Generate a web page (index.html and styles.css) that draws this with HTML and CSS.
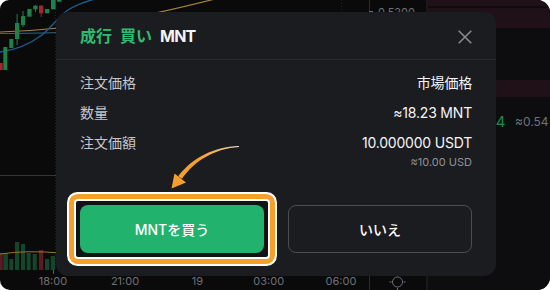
FILE: index.html
```html
<!DOCTYPE html>
<html lang="ja">
<head>
<meta charset="utf-8">
<title>成行 買い MNT</title>
<link rel="stylesheet" href="styles.css">
</head>
<body>
<div class="frame">
  <svg class="chart" width="550" height="290" viewBox="0 0 550 290" xmlns="http://www.w3.org/2000/svg">
    <!-- order book column -->
    <rect x="427" y="0" width="123" height="290" fill="#0d0d0f"/>
    <rect x="427" y="0" width="123" height="6" fill="#1f1117"/>
    <rect x="427" y="8" width="123" height="20" fill="#1f1117"/>
    <rect x="427" y="80" width="123" height="17" fill="#1f1117"/>
    <line x1="427" y1="0" x2="427" y2="290" stroke="#19191c" stroke-width="2"/>
    <!-- price scale separator -->
    <line x1="369.5" y1="0" x2="369.5" y2="290" stroke="#2a2b2f"/>
    <line x1="369" y1="11.5" x2="373" y2="11.5" stroke="#6e7178"/>
    <text class="axis" x="378" y="16">0.5200</text>
    <!-- grid -->
    <line x1="55.5" y1="0" x2="55.5" y2="270" stroke="#222327" stroke-dasharray="1 2"/>
    <line x1="341.5" y1="0" x2="341.5" y2="270" stroke="#222327" stroke-dasharray="1 2"/>
    <line x1="0" y1="175.5" x2="369" y2="175.5" stroke="#35363a"/>
    <!-- moving averages -->
    <path d="M0,33.5 C20,33.4 40,33 60,32.5 C120,31 200,29 300,25" fill="none" stroke="#2f6580" stroke-width="1.2"/>
    <path d="M0,32 C40,30.5 80,27 120,20 C150,15 175,9 215,-1" fill="none" stroke="#a68238" stroke-width="1.2"/>
    <path d="M0,52 C15,50 30,44 42,35 C52,27 58,17 68,10 C76,5 84,2 95,-1" fill="none" stroke="#1f5b8a" stroke-width="1.4"/>
    <!-- candles -->
    <g fill="#1d8149">
      <rect x="3.3" y="47" width="4" height="23"/>
      <rect x="9.3" y="39" width="4" height="9"/>
      <rect x="15" y="23" width="4.3" height="16"/>
      <rect x="16.6" y="14" width="1" height="31"/>
      <rect x="21" y="16" width="4" height="9"/>
      <rect x="22.5" y="11" width="1" height="16"/>
      <rect x="27.3" y="9" width="4.3" height="7.7"/>
      <rect x="33.3" y="5.7" width="4.3" height="3.6"/>
      <rect x="35" y="5" width="1" height="7"/>
      <rect x="45" y="9" width="4.3" height="4.3"/>
      <rect x="51" y="0" width="4.6" height="9.3"/>
      <rect x="57" y="-2" width="4.6" height="3.7"/>
    </g>
    <g fill="#a3262e">
      <rect x="-1" y="63" width="3.7" height="7"/>
      <rect x="39" y="5.7" width="4.3" height="7.6"/>
      <rect x="40.7" y="5" width="1" height="12"/>
    </g>
    <!-- volume -->
    <g fill="#14462b">
      <rect x="3.3" y="253" width="4.6" height="17"/>
      <rect x="9.3" y="259" width="4" height="11"/>
      <rect x="15" y="242" width="4.3" height="28"/>
      <rect x="21" y="244" width="4" height="26"/>
      <rect x="26.7" y="253" width="4" height="17"/>
      <rect x="32.7" y="254" width="4" height="16"/>
      <rect x="45" y="259" width="4.3" height="11"/>
      <rect x="50.7" y="256" width="4.3" height="14"/>
    </g>
    <g fill="#5a1c22">
      <rect x="-1" y="253" width="3.7" height="17"/>
      <rect x="39" y="250" width="4.3" height="20"/>
    </g>
    <path d="M0,254 Q28,250 60,253" fill="none" stroke="#9a7430" stroke-width="1"/>
    <!-- time axis -->
    <line x1="53.5" y1="270" x2="53.5" y2="274" stroke="#5a5d63"/>
    <text class="axis" x="53" y="285" text-anchor="middle">18:00</text>
    <text class="axis" x="125" y="285" text-anchor="middle">21:00</text>
    <text class="axis" x="197.5" y="285" text-anchor="middle">19</text>
    <text class="axis" x="268.7" y="285" text-anchor="middle">03:00</text>
    <text class="axis" x="341" y="285" text-anchor="middle">06:00</text>
    <!-- sun -->
    <g stroke="#6e7178" stroke-width="1" fill="none">
      <circle cx="397.5" cy="282" r="5"/>
      <line x1="397.5" y1="274" x2="397.5" y2="276"/>
      <line x1="397.5" y1="288" x2="397.5" y2="290"/>
      <line x1="389.5" y1="282" x2="391.5" y2="282"/>
      <line x1="403.5" y1="282" x2="405.5" y2="282"/>
    </g>
    <!-- order book text -->
    <text class="ob-green" x="505.5" y="127" text-anchor="end">4</text>
    <text class="ob-gray" x="515" y="125.5">≈0.54</text>
  </svg>

  <div class="modal">
    <div class="modal-head">
      <h2 class="title"><span class="buy">成行</span><span class="buy">買い</span><span class="sym">MNT</span></h2>
      <button class="close" aria-label="close">
        <svg width="14" height="14" viewBox="0 0 14 14"><path d="M0.7 0.7 L13.3 13.3 M13.3 0.7 L0.7 13.3" stroke="#8b8d93" stroke-width="1.5" fill="none"/></svg>
      </button>
    </div>
    <div class="modal-body">
      <div class="rows">
        <div class="row"><span class="label">注文価格</span><span class="value">市場価格</span></div>
        <div class="row"><span class="label">数量</span><span class="value">≈18.23 MNT</span></div>
        <div class="group">
          <div class="row"><span class="label">注文価額</span><span class="value">10.000000 USDT</span></div>
          <div class="sub">≈10.00 USD</div>
        </div>
      </div>
      <div class="actions">
        <div class="hl"><button class="btn primary">MNTを買う</button></div>
        <button class="btn ghost">いいえ</button>
      </div>
    </div>
  </div>

  <svg class="arrow" width="550" height="290" viewBox="0 0 550 290" xmlns="http://www.w3.org/2000/svg">
    <defs>
      <linearGradient id="ag" gradientUnits="userSpaceOnUse" x1="240" y1="146" x2="200" y2="160">
        <stop offset="0" stop-color="#ffffff" stop-opacity="0.85"/>
        <stop offset="0.35" stop-color="#f7c07a"/>
        <stop offset="1" stop-color="#f5a02c"/>
      </linearGradient>
    </defs>
    <path d="M239,145.9 C213.5,146.8 191.5,158 178.2,176.3 L182,178.8 C195,160.5 214.5,148.8 239,147.1 Z" fill="url(#ag)"/>
    <polygon points="171.5,188.5 174.5,173.5 186,182.5" fill="#f5a02c"/>
  </svg>
</div>
</body>
</html>
```

FILE: styles.css
```css
* {
  box-sizing: border-box;
}

body {
  margin: 0;
  background: #ffffff;
  font-family: Inter, "Noto Sans CJK JP", sans-serif;
}

.frame {
  position: relative;
  width: 550px;
  height: 290px;
  border-radius: 9px 13px 13px 10px;
  overflow: hidden;
  background: #0a0a0b;
}

.chart,
.arrow {
  position: absolute;
  left: 0;
  top: 0;
  display: block;
}

.arrow {
  pointer-events: none;
}

.axis {
  font-family: Inter, sans-serif;
  font-size: 11px;
  fill: #6e7178;
}

.ob-green {
  font-family: Inter, sans-serif;
  font-size: 15px;
  fill: #1f8a4f;
}

.ob-gray {
  font-family: Inter, sans-serif;
  font-size: 12px;
  fill: #6e7178;
}

.modal {
  position: absolute;
  left: 56px;
  top: 12px;
  width: 440px;
  height: 264px;
  background: #1b1c20;
  border-radius: 12px;
  display: flex;
  flex-direction: column;
}

.modal-head {
  height: 48px;
  padding: 0 24px;
  display: flex;
  align-items: center;
  justify-content: space-between;
  border-bottom: 1px solid #2a2b30;
}

.title {
  margin: 0;
  display: flex;
  gap: 8px;
  font-size: 16px;
  line-height: 22px;
  font-weight: 700;
  color: #f3f4f6;
}

.title .buy {
  color: #2ebd70;
}

.title .sym {
  letter-spacing: -0.8px;
}

.close {
  width: 14px;
  height: 14px;
  padding: 0;
  border: 0;
  background: none;
  display: flex;
  margin-top: 2px;
}

.modal-body {
  padding: 11px 24px 23px;
  display: flex;
  flex-direction: column;
}

.rows {
  display: flex;
  flex-direction: column;
  gap: 8px;
}

.row {
  display: flex;
  justify-content: space-between;
  align-items: center;
  height: 22px;
  font-size: 14px;
}

.label {
  color: #c4c7cd;
}

.value {
  color: #f4f5f7;
  letter-spacing: -0.2px;
}

.sub {
  margin-top: 1px;
  text-align: right;
  font-size: 11px;
  line-height: 16px;
  color: #8e9198;
}

.actions {
  margin-top: 35px;
  display: flex;
  gap: 24px;
}

.hl {
  margin: -6px;
  padding: 4px;
  border: 2px solid #ffffff;
  border-radius: 4px;
  background: #121316;
  box-shadow: 0 0 0 5px #f5a02a, 0 0 0 7px #ffffff;
  display: flex;
}

.btn {
  width: 184px;
  height: 48px;
  border-radius: 8px;
  font-family: inherit;
  font-size: 14px;
  font-weight: 500;
  color: #ffffff;
}

.btn.primary {
  background: #21b36d;
  border: 0;
}

.btn.ghost {
  background: transparent;
  border: 1px solid #4b4d53;
}
```
